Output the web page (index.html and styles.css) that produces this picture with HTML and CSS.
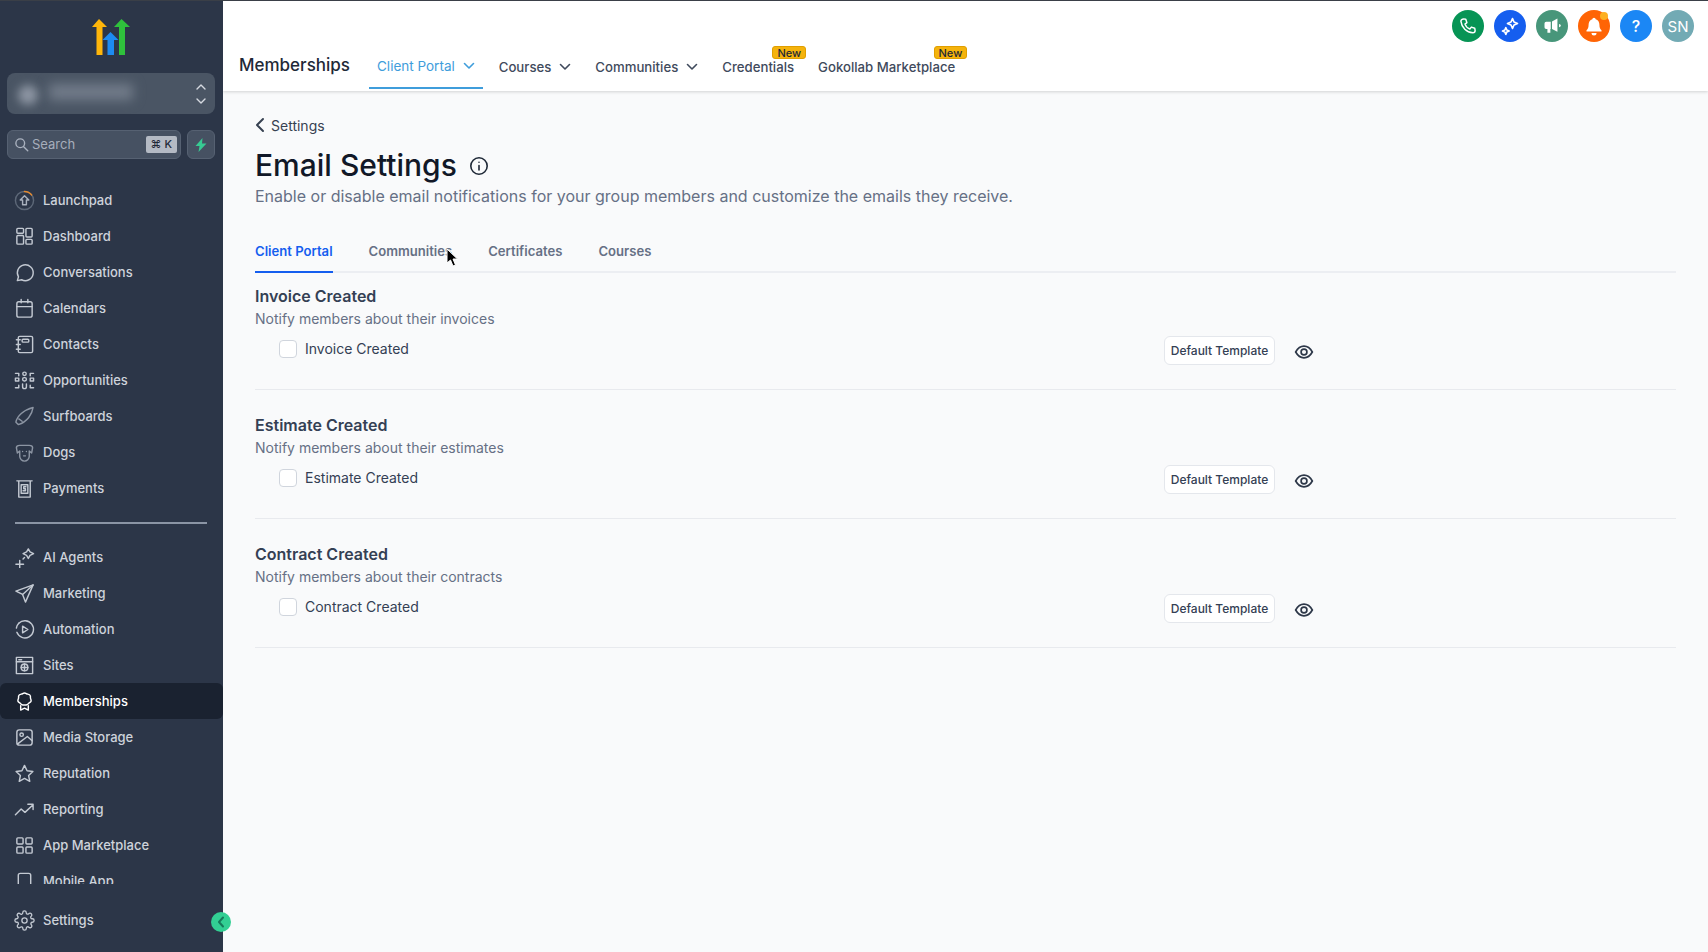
FILE: index.html
```html
<!DOCTYPE html>
<html lang="en">
<head>
    <meta charset="UTF-8">
    <meta name="viewport" content="width=device-width, initial-scale=1.0">
    <title>Email Settings - Memberships</title>
    <link rel="stylesheet" href="styles.css">
</head>
<body>
    <div class="app">
        <!-- Sidebar -->
        <aside class="sidebar">
            <div class="logo">
                <svg width="42" height="38" viewBox="0 0 42 38">
                    <path fill="#ffb60a" d="M9 1l8 8h-4.500v28h-6V9H2z"/>
                    <path fill="#1d8bf1" d="M20.500 14l8 8H24v15h-6.500V22H12.500z"/>
                    <path fill="#2fc13c" d="M31.500 1l8.500 8h-5v28h-6V9h-5z"/>
                </svg>
            </div>
            <div class="switcher">
                <span class="blur-dot"></span>
                <span class="blur-name"></span>
                <svg class="switcher-arrows" width="12" height="24" viewBox="0 0 12 24" fill="none" stroke="#d5d9e0" stroke-width="1.400" stroke-linecap="round" stroke-linejoin="round">
                    <path d="M2 7l4-4 4 4"/><path d="M2 17l4 4 4-4"/>
                </svg>
            </div>
            <div class="search-row">
                <div class="search">
                    <svg width="15" height="15" viewBox="0 0 24 24" fill="none" stroke="#aab2bf" stroke-width="2.200" stroke-linecap="round"><circle cx="10" cy="10" r="7"/><path d="M15.500 15.500L22 22"/></svg>
                    <span class="search-text">Search</span>
                    <span class="kbd">⌘ K</span>
                </div>
                <div class="bolt">
                    <svg width="12" height="14" viewBox="0 0 12 14"><path fill="#37ca93" d="M7.500 0L.5 8h4l-1 6 8-8.500H7z"/></svg>
                </div>
            </div>

            <nav class="nav">
                <a class="nav-item">
                    <svg class="ico" viewBox="0 0 22 22"><circle cx="11" cy="11" r="9.500" stroke="#5d6878"/><path stroke="#e58a2e" d="M11 1.500a9.500 9.500 0 0 1 7.500 3.700"/><path stroke="#a9b1bd" d="M11 6l4.500 4.500h-2.500v5h-4v-5H6.500z"/></svg>
                    Launchpad
                </a>
                <a class="nav-item">
                    <svg class="ico" viewBox="0 0 22 22"><rect x="3" y="2.500" width="7" height="5" rx="1"/><rect x="12.500" y="2.500" width="6.500" height="9" rx="1"/><rect x="3" y="10" width="7" height="9" rx="1"/><rect x="12.500" y="14" width="6.500" height="5" rx="1"/></svg>
                    Dashboard
                </a>
                <a class="nav-item">
                    <svg class="ico" viewBox="0 0 22 22"><path d="M3.500 19.500l1.200-4A8.300 8.300 0 1 1 8 18.600z"/></svg>
                    Conversations
                </a>
                <a class="nav-item">
                    <svg class="ico" viewBox="0 0 22 22"><rect x="3" y="4" width="16" height="16" rx="2"/><path d="M3 9h16M7.500 1.500V5M14.500 1.500V5"/></svg>
                    Calendars
                </a>
                <a class="nav-item">
                    <svg class="ico" viewBox="0 0 22 22"><rect x="4.500" y="2.500" width="15" height="17" rx="1.500"/><rect x="8.500" y="5.500" width="7" height="3" rx="1"/><path d="M2.500 6h4M2.500 11h4M2.500 16h4"/></svg>
                    Contacts
                </a>
                <a class="nav-item">
                    <svg class="ico" viewBox="0 0 22 22" stroke-width="1.800"><circle cx="11" cy="4" r="1.800"/><rect x="9" y="8" width="4" height="3.500" rx="1.700"/><path d="M9 14.500v3a2 2 0 0 0 4 0v-3M1.500 3.500h3.500V6M20.500 3.500H17V6M1.500 18.500H5V16M20.500 18.500H17V16M1.500 8.500H5v3H1.500zM17 8.500h3.500v3H17z"/></svg>
                    Opportunities
                </a>
                <a class="nav-item dim">
                    <svg class="ico" viewBox="0 0 22 22"><path d="M2 17c1-6 8-13 18-15.500-1 7-6 15-15.500 18z"/><path d="M5 13.500l3.500 2.500"/></svg>
                    Surfboards
                </a>
                <a class="nav-item dim">
                    <svg class="ico" viewBox="0 0 22 22"><path d="M6 3.500h10c2 0 3.500 1 3.500 2.500l-1 5.500-2.500-2V15c0 3-2.500 5-5 5s-5-2-5-5V9.500L3.500 11.500l-1-5.500C2.500 4.500 4 3.500 6 3.500z"/><path d="M9 10h.01M13 10h.01M10 14.500h2"/></svg>
                    Dogs
                </a>
                <a class="nav-item">
                    <svg class="ico" viewBox="0 0 22 22"><path d="M3 3h16M5 3v17h12V3"/><rect x="7.500" y="7" width="7" height="9"/><path d="M12.500 9.200h-2.300v2h1.800v2.200H9.500"/></svg>
                    Payments
                </a>

                <div class="nav-divider"></div>

                <a class="nav-item">
                    <svg class="ico" viewBox="0 0 22 22"><path d="M15 2l1.800 3.200L20.500 7l-3.700 1.800L15 12l-1.800-3.200L9.500 7l3.700-1.800z"/><path d="M2 18h8M6 14v8M9.500 12.500L11 11"/></svg>
                    AI Agents
                </a>
                <a class="nav-item">
                    <svg class="ico" viewBox="0 0 22 22"><path d="M20 2L2 8.500l7 3.500 3 8z"/><path d="M9 12l11-10"/></svg>
                    Marketing
                </a>
                <a class="nav-item">
                    <svg class="ico" viewBox="0 0 22 22"><path d="M5 4.500A9 9 0 1 1 3 14"/><path d="M2.500 9.500A9 9 0 0 1 5 4.500"/><path d="M9 7.500l5.500 3.500L9 14.500z"/></svg>
                    Automation
                </a>
                <a class="nav-item">
                    <svg class="ico" viewBox="0 0 22 22"><rect x="2.500" y="2.500" width="17" height="17"/><path d="M2.500 7h17M5 5h3"/><circle cx="11" cy="13" r="3.500"/><path d="M7.500 13h7M11 9.500v7"/></svg>
                    Sites
                </a>
                <a class="nav-item active">
                    <svg class="ico" viewBox="0 0 22 22" stroke-width="1.800"><path d="M11 2c1.500 0 2 1 3 1.200 1 .2 2.500.3 3 1.500.5 1 0 2 .3 3 .3 1 1 2 .5 3.200-.5 1-1.500 1.300-2.300 2-.8.700-1.500 1.600-2.800 1.800H9.300c-1.300-.2-2-1.100-2.800-1.800-.8-.7-1.800-1-2.300-2-.5-1.200.2-2.200.5-3.200.3-1-.2-2 .3-3 .5-1.200 2-1.300 3-1.500C9 3 9.500 2 11 2z"/><path d="M7 15.500V20l4-2 4 2v-4.500"/></svg>
                    Memberships
                </a>
                <a class="nav-item">
                    <svg class="ico" viewBox="0 0 22 22"><rect x="3" y="3" width="16" height="16" rx="2.500"/><circle cx="8" cy="8" r="1.800"/><path d="M3.500 18L14 10l5 4.500"/></svg>
                    Media Storage
                </a>
                <a class="nav-item">
                    <svg class="ico" viewBox="0 0 22 22"><path d="M11 2.500l2.700 5.600 6.100.8-4.500 4.200 1.200 6.100L11 16.200l-5.500 3 1.200-6.100-4.500-4.200 6.100-.8z"/></svg>
                    Reputation
                </a>
                <a class="nav-item">
                    <svg class="ico" viewBox="0 0 22 22"><path d="M1.500 16.500l6-6 4 3.500 8.500-8M14.500 5.500H20V11"/></svg>
                    Reporting
                </a>
                <a class="nav-item">
                    <svg class="ico" viewBox="0 0 22 22"><rect x="3" y="3" width="6.500" height="6.500" rx="1"/><rect x="12.500" y="3" width="6.500" height="6.500" rx="1"/><rect x="3" y="12.500" width="6.500" height="6.500" rx="1"/><rect x="12.500" y="12.500" width="6.500" height="6.500" rx="1"/></svg>
                    App Marketplace
                </a>
                <a class="nav-item">
                    <svg class="ico" viewBox="0 0 22 22"><rect x="4.500" y="2.500" width="13" height="19" rx="2"/></svg>
                    Mobile App
                </a>
            </nav>

            <a class="nav-item settings-link">
                <svg class="ico" viewBox="0 0 24 24"><circle cx="12" cy="12" r="3"/><path d="M19.400 15a1.650 1.650 0 0 0 .33 1.820l.06.06a2 2 0 1 1-2.830 2.830l-.06-.06a1.650 1.650 0 0 0-2.820 1.170V21a2 2 0 1 1-4 0v-.09a1.650 1.650 0 0 0-2.820-1.170l-.06.06a2 2 0 1 1-2.830-2.830l.06-.06A1.650 1.650 0 0 0 3.090 14H3a2 2 0 1 1 0-4h.09a1.650 1.650 0 0 0 1.170-2.820l-.06-.06a2 2 0 1 1 2.830-2.830l.06.06A1.650 1.650 0 0 0 10 3.090V3a2 2 0 1 1 4 0v.09a1.650 1.650 0 0 0 2.820 1.170l.06-.06a2 2 0 1 1 2.830 2.830l-.06.06A1.650 1.650 0 0 0 20.910 10H21a2 2 0 1 1 0 4h-.09a1.650 1.650 0 0 0-1.510 1z"/></svg>
                Settings
            </a>
            <span class="collapse-btn">
                <svg width="8" height="12" viewBox="0 0 8 12" fill="none" stroke="#16785a" stroke-width="2" stroke-linecap="round" stroke-linejoin="round"><path d="M6 1.500L2 6l4 4.500"/></svg>
            </span>
        </aside>

        <div class="main">
            <!-- Top bar -->
            <header class="topbar">
                <div class="app-title">Memberships</div>
                <div class="topnav">
                    <a class="topnav-item selected">Client Portal
                        <svg width="12" height="8" viewBox="0 0 12 8" fill="none" stroke="currentColor" stroke-width="1.600" stroke-linecap="round" stroke-linejoin="round"><path d="M1.500 1.500L6 6l4.500-4.500"/></svg>
                    </a>
                    <a class="topnav-item">Courses
                        <svg width="12" height="8" viewBox="0 0 12 8" fill="none" stroke="currentColor" stroke-width="1.600" stroke-linecap="round" stroke-linejoin="round"><path d="M1.500 1.500L6 6l4.500-4.500"/></svg>
                    </a>
                    <a class="topnav-item">Communities
                        <svg width="12" height="8" viewBox="0 0 12 8" fill="none" stroke="currentColor" stroke-width="1.600" stroke-linecap="round" stroke-linejoin="round"><path d="M1.500 1.500L6 6l4.500-4.500"/></svg>
                    </a>
                    <a class="topnav-item">Credentials<span class="new-badge">New</span></a>
                    <a class="topnav-item">Gokollab Marketplace<span class="new-badge">New</span></a>
                </div>
                <div class="actions">
                    <span class="round green">
                        <svg width="18" height="18" viewBox="0 0 24 24" fill="none" stroke="#fff" stroke-width="2" stroke-linecap="round" stroke-linejoin="round"><path d="M6 2.500l3 .5 1.500 4.500L8 9.500c1 3 3.500 5.500 6.500 6.500l2-2.500 4.500 1.500.5 3c0 1.500-1.500 3-3 3C10 20.500 3.500 14 2.500 5.500c0-1.500 2-3 3.500-3z"/></svg>
                    </span>
                    <span class="round blue">
                        <svg width="20" height="20" viewBox="0 0 24 24" fill="none" stroke="#fff" stroke-width="2" stroke-linejoin="round"><path d="M15 3l1.800 4.200L21 9l-4.200 1.800L15 15l-1.800-4.200L9 9l4.200-1.800z"/><path d="M7 14l1.200 2.800L11 18l-2.800 1.200L7 22l-1.200-2.800L3 18l2.800-1.200z"/></svg>
                    </span>
                    <span class="round teal">
                        <svg width="20" height="20" viewBox="0 0 24 24" fill="#fff"><path d="M18.500 3v16l-6.500-3.500V6.500z"/><path d="M10.500 7H5a2 2 0 0 0-2 2v4.500a2 2 0 0 0 2 2h1.500V20H10v-4.500h.5z"/><path d="M20.500 9.500a2 2 0 0 1 0 4z"/></svg>
                    </span>
                    <span class="round orange">
                        <svg width="20" height="20" viewBox="0 0 24 24" fill="#fff"><path d="M12 2a2 2 0 0 1 2 2c3 1 4.500 3.500 4.500 6.500 0 3 .7 5 2.500 6.500v1.500H3V17c1.800-1.500 2.500-3.500 2.500-6.500S7 5 10 4a2 2 0 0 1 2-2z"/><path d="M9 20.500h6a3 3 0 0 1-6 0z"/></svg>
                        <span class="dot"></span>
                    </span>
                    <span class="round sky">?</span>
                    <span class="round avatar">SN</span>
                </div>
            </header>

            <!-- Page content -->
            <main class="content">
                <a class="back">
                    <svg width="10" height="16" viewBox="0 0 10 16" fill="none" stroke="#374151" stroke-width="2" stroke-linecap="round" stroke-linejoin="round"><path d="M8 2L2 8l6 6"/></svg>
                    Settings
                </a>
                <div class="page-title">
                    <h1>Email Settings</h1>
                    <svg class="info" width="20" height="20" viewBox="0 0 20 20" fill="none" stroke="#1f2937" stroke-width="1.600" stroke-linecap="round"><circle cx="10" cy="10" r="8.200"/><path d="M10 9.500v4.500M10 6.200h.01"/></svg>
                </div>
                <p class="subtitle">Enable or disable email notifications for your group members and customize the emails they receive.</p>

                <div class="tabs">
                    <a class="tab current">Client Portal</a>
                    <a class="tab">Communities</a>
                    <a class="tab">Certificates</a>
                    <a class="tab">Courses</a>
                </div>

                <section class="notice">
                    <h2>Invoice Created</h2>
                    <p>Notify members about their invoices</p>
                    <div class="notice-row">
                        <label class="check"><span class="box"></span>Invoice Created</label>
                        <div class="notice-actions">
                            <button class="tpl-btn">Default Template</button>
                            <svg class="eye" width="20" height="20" viewBox="0 0 24 24" fill="none" stroke="#2d3748" stroke-width="2"><path d="M2 12c2.500-4.500 6-7 10-7s7.500 2.500 10 7c-2.500 4.500-6 7-10 7s-7.500-2.500-10-7z"/><circle cx="12" cy="12" r="3.500"/></svg>
                        </div>
                    </div>
                </section>

                <section class="notice">
                    <h2>Estimate Created</h2>
                    <p>Notify members about their estimates</p>
                    <div class="notice-row">
                        <label class="check"><span class="box"></span>Estimate Created</label>
                        <div class="notice-actions">
                            <button class="tpl-btn">Default Template</button>
                            <svg class="eye" width="20" height="20" viewBox="0 0 24 24" fill="none" stroke="#2d3748" stroke-width="2"><path d="M2 12c2.500-4.500 6-7 10-7s7.500 2.500 10 7c-2.500 4.500-6 7-10 7s-7.500-2.500-10-7z"/><circle cx="12" cy="12" r="3.500"/></svg>
                        </div>
                    </div>
                </section>

                <section class="notice">
                    <h2>Contract Created</h2>
                    <p>Notify members about their contracts</p>
                    <div class="notice-row">
                        <label class="check"><span class="box"></span>Contract Created</label>
                        <div class="notice-actions">
                            <button class="tpl-btn">Default Template</button>
                            <svg class="eye" width="20" height="20" viewBox="0 0 24 24" fill="none" stroke="#2d3748" stroke-width="2"><path d="M2 12c2.500-4.500 6-7 10-7s7.500 2.500 10 7c-2.500 4.500-6 7-10 7s-7.500-2.500-10-7z"/><circle cx="12" cy="12" r="3.500"/></svg>
                        </div>
                    </div>
                </section>
            </main>
        </div>
    </div>

    <!-- Mouse pointer caught in the screenshot -->
    <svg class="cursor" width="14" height="20" viewBox="0 0 14 20"><path fill="#000" stroke="#fff" stroke-width="1" d="M1 1v14l3.500-3 2.500 6 2.500-1-2.500-6h4.500z"/></svg>
</body>
</html>
```

FILE: styles.css
```css
* {
    box-sizing: border-box;
}
html, body {
    margin: 0;
    height: 100%;
    overflow: hidden;
}
body {
    font-family: Inter, "Liberation Sans", sans-serif;
    color: #1f2937;
    background: #f9fafb;
    border-top: 1px solid #3a3f47;
}
.app {
    display: flex;
    height: 951px;
}

/* Sidebar */
.sidebar {
    position: relative;
    width: 223px;
    flex-shrink: 0;
    background: #2c3648;
    display: flex;
    flex-direction: column;
}
.logo {
    height: 72px;
    padding: 17px 0 0 90px;
}
.switcher {
    display: flex;
    align-items: center;
    height: 41px;
    margin: 0 8px 0 7px;
    padding: 0 8px 0 11px;
    border-radius: 8px;
    background: #4a5564;
    overflow: hidden;
}
.blur-dot {
    width: 20px;
    height: 20px;
    margin-top: 2px;
    border-radius: 50%;
    background: #8d96a3;
    filter: blur(5px);
}
.blur-name {
    width: 84px;
    height: 16px;
    margin-left: 11px;
    margin-bottom: 4px;
    background: #727c8a;
    filter: blur(6px);
}
.switcher-arrows {
    margin-left: auto;
}
.search-row {
    display: flex;
    gap: 6px;
    height: 29px;
    margin: 16px 8px 23px 7px;
}
.search {
    flex: 1;
    display: flex;
    align-items: center;
    gap: 3px;
    padding: 0 3px 1px 6px;
    background: #465162;
    border: 1px solid #566172;
    border-radius: 6px;
}
.search-text {
    flex: 1;
    font-size: 13px;
    color: #a6aebb;
}
.kbd {
    padding: 2px 5px;
    font-size: 11px;
    line-height: 13px;
    font-weight: 500;
    color: #1f2937;
    background: #b4bac4;
    border-radius: 2px;
    white-space: nowrap;
}
.bolt {
    width: 28px;
    display: flex;
    align-items: center;
    justify-content: center;
    background: #465162;
    border: 1px solid #566172;
    border-radius: 6px;
}
.nav {
    height: 702px;
    overflow: hidden;
}
.nav-item {
    display: flex;
    align-items: center;
    gap: 8px;
    height: 36px;
    padding-left: 14px;
    font-size: 13px;
    font-weight: 500;
    color: #ced3db;
    border-radius: 6px;
}
.nav-item.active {
    color: #fff;
    background: #1a2230;
}
.ico {
    width: 21px;
    height: 21px;
    flex-shrink: 0;
    fill: none;
    stroke: #c3c9d2;
    stroke-width: 1.500;
    stroke-linecap: round;
    stroke-linejoin: round;
}
.dim .ico {
    stroke: #8c95a3;
}
.active .ico {
    stroke: #fff;
}
.nav-divider {
    height: 2px;
    margin: 16px 16px 15px 15px;
    background: #8b95a5;
}
.settings-link {
    margin-top: 18px;
}
.collapse-btn {
    position: absolute;
    top: 911px;
    left: 211px;
    width: 20px;
    height: 20px;
    display: flex;
    align-items: center;
    justify-content: center;
    border-radius: 50%;
    background: #32cf93;
}

/* Top bar */
.main {
    flex: 1;
    min-width: 0;
    display: flex;
    flex-direction: column;
}
.topbar {
    display: flex;
    height: 90px;
    padding-left: 16px;
    background: #fff;
    box-shadow: 0 1px 3px rgba(0, 0, 0, 0.16);
}
.app-title {
    margin-top: 52px;
    font-size: 17px;
    line-height: 24px;
    font-weight: 500;
    color: #1f2937;
}
.topnav {
    display: flex;
    gap: 8px;
    margin-left: 19px;
    height: 88px;
}
.topnav-item {
    position: relative;
    display: flex;
    align-items: flex-start;
    gap: 8px;
    padding: 57px 8px 0;
    font-size: 13.200px;
    line-height: 18px;
    font-weight: 500;
    color: #3f4a5c;
    white-space: nowrap;
}
.topnav-item svg {
    margin-top: 5px;
}
.topnav-item.selected {
    padding-top: 56px;
    color: #3f9ddb;
    font-size: 13.500px;
    font-weight: 400;
    border-bottom: 2px solid #3f9ddb;
}
.new-badge {
    position: absolute;
    top: 45px;
    right: -4px;
    height: 13px;
    padding: 0 4px;
    font-size: 11px;
    line-height: 12px;
    font-weight: 500;
    color: #1f2937;
    background: #f5b30c;
    border: 1px solid #e09f00;
    border-radius: 3px;
}
.actions {
    display: flex;
    gap: 10px;
    margin-left: auto;
    padding: 9px 14px 0 0;
}
.round {
    position: relative;
    width: 32px;
    height: 32px;
    display: flex;
    align-items: center;
    justify-content: center;
    border-radius: 50%;
    color: #fff;
    font-size: 15px;
}
.green { background: #079455; }
.blue { background: #155eef; }
.teal { background: #47967a; }
.orange { background: #ff6405; }
.sky { background: #1b87f5; font-size: 16px; font-weight: 500; }
.avatar { background: #72aab4; font-size: 15px; }
.dot {
    position: absolute;
    top: 2px;
    right: 2px;
    width: 8px;
    height: 8px;
    border-radius: 50%;
    background: #fdb022;
}

/* Page content */
.content {
    flex: 1;
    padding: 24px 32px 0 32px;
}
.back {
    display: flex;
    align-items: center;
    gap: 6px;
    height: 20px;
    font-size: 14px;
    color: #374151;
}
.page-title {
    display: flex;
    align-items: center;
    gap: 12px;
    margin-top: 10px;
    height: 40px;
}
.info {
    margin-top: 1px;
}
h1 {
    margin: 0;
    font-size: 30px;
    line-height: 40px;
    font-weight: 500;
    color: #111827;
}
.subtitle {
    margin: -1px 0 0;
    font-size: 16px;
    line-height: 24px;
    color: #667085;
}
.tabs {
    display: flex;
    gap: 36px;
    margin-top: 22px;
    height: 43px;
    border-bottom: 2px solid #eceef2;
}
.tab {
    height: 43px;
    padding-top: 12px;
    font-size: 13.100px;
    line-height: 18px;
    font-weight: 600;
    color: #667085;
}
.tab.current {
    color: #155eef;
    border-bottom: 2px solid #155eef;
}
.notice {
    height: 117px;
    margin-bottom: 12px;
    padding-top: 12px;
    border-bottom: 1px solid #e8eaee;
}
.notice h2 {
    margin: 0;
    font-size: 16px;
    line-height: 23px;
    font-weight: 600;
    color: #344054;
}
.notice p {
    margin: 0;
    font-size: 14px;
    line-height: 22px;
    color: #667085;
}
.notice-row {
    display: flex;
    justify-content: space-between;
    align-items: flex-start;
    margin-top: 9px;
    padding-left: 24px;
    width: 1059px;
}
.check {
    display: flex;
    align-items: center;
    gap: 8px;
    font-size: 14px;
    line-height: 20px;
    color: #344054;
}
.box {
    width: 18px;
    height: 18px;
    background: #fff;
    border: 1px solid #d0d5dd;
    border-radius: 4px;
}
.notice-actions {
    display: flex;
    align-items: center;
    gap: 19px;
    margin-top: -3px;
}
.tpl-btn {
    width: 111px;
    height: 29px;
    padding: 0;
    font-family: inherit;
    font-size: 12px;
    font-weight: 500;
    color: #344054;
    background: #fff;
    border: 1px solid #e4e7ec;
    border-radius: 6px;
}
.eye {
    margin-top: 2px;
}
.cursor {
    position: absolute;
    top: 248px;
    left: 446px;
}
```
